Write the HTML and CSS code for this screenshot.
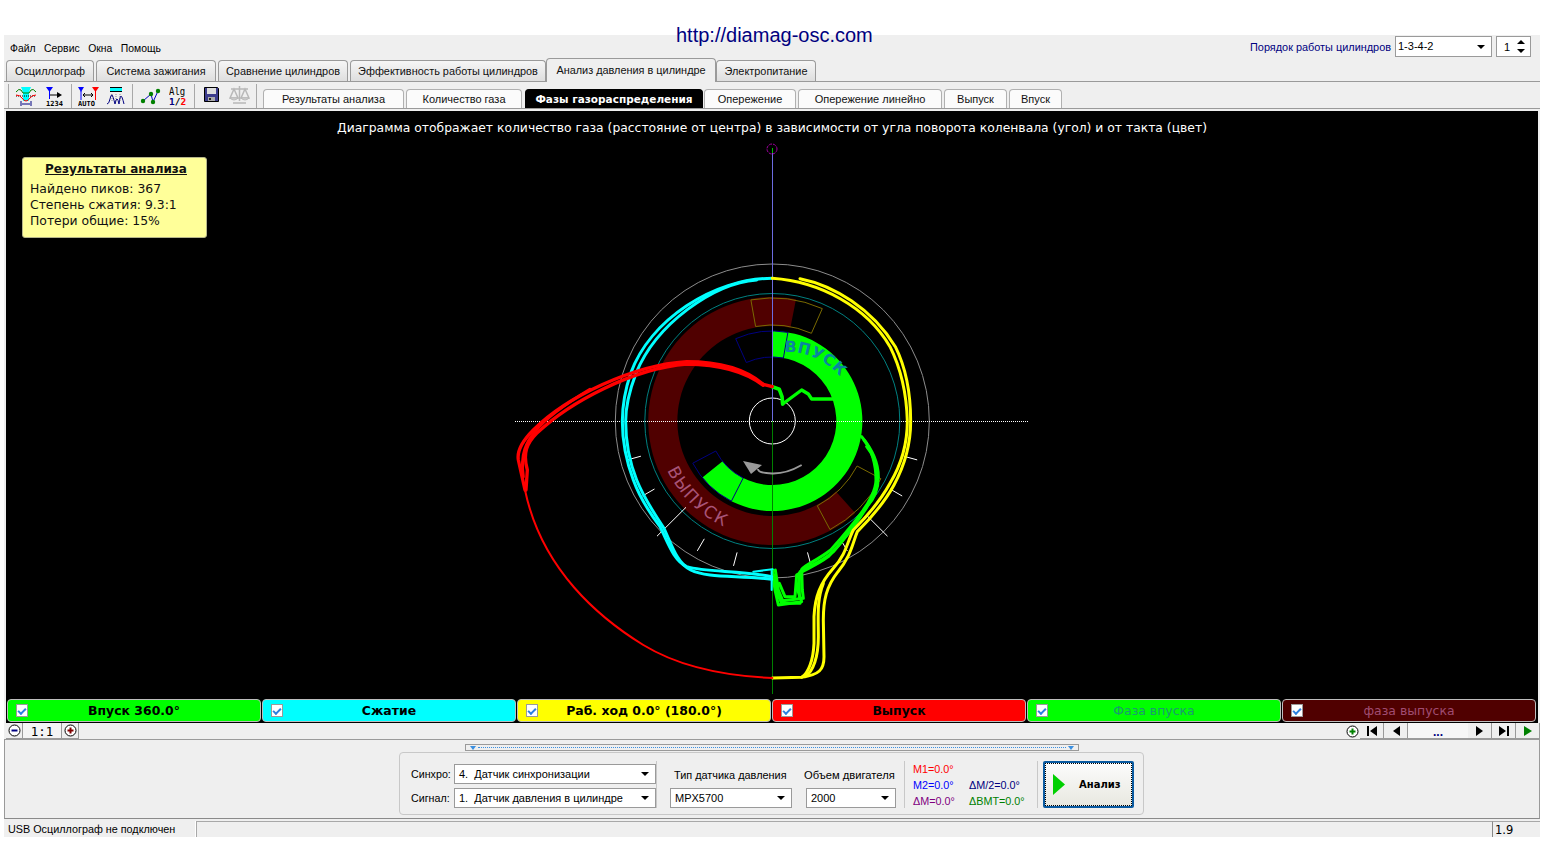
FILE: index.html
```html
<!DOCTYPE html>
<html lang="ru">
<head>
<meta charset="utf-8">
<title>Анализ давления в цилиндре</title>
<link rel="stylesheet" href="styles.css">
</head>
<body>
<div class="url">http://diamag-osc.com</div>
<div class="app">
  <div class="menubar">
    <nav class="menu"><span>Файл</span><span>Сервис</span><span>Окна</span><span>Помощь</span></nav>
    <div class="order">
      <span class="order-label">Порядок работы цилиндров</span>
      <div class="combo combo-order"><span>1-3-4-2</span><i class="arrow"></i></div>
      <div class="combo combo-spin"><span>1</span><b class="spin"><i class="up"></i><i class="down"></i></b></div>
    </div>
  </div>
  <div class="tabs">
    <span class="tab w88">Осциллограф</span>
    <span class="tab w120">Система зажигания</span>
    <span class="tab w130">Сравнение цилиндров</span>
    <span class="tab w195">Эффективность работы цилиндров</span>
    <span class="tab tab-active">Анализ давления в цилиндре</span>
    <span class="tab w100">Электропитание</span>
  </div>
  <div class="toolbar">
    <i class="sep"></i>
    <div class="tools">
      <svg class="ico i1" viewBox="0 0 22 20"><path d="M6 1h10l-2 5v9H8V6z" fill="#00ffff"/><path d="M1 6q3-4 5-2l2 3h6l2-3q2-2 5 2" fill="none" stroke="#008000"/><path d="M1 10h20" stroke="#000" stroke-dasharray="1 1"/><path d="M1 9q4 0 6 3t4 3 4-3 6-3" fill="none" stroke="#ff0000"/><path d="M6 15v5M16 15v5M7 18h8" stroke="#000080"/></svg>
      <svg class="ico i2" viewBox="0 0 18 20"><path d="M1 1h7L4.500 6z" fill="#0000ff"/><path d="M4.500 5v8" stroke="#0000ff"/><path d="M5 9h8" stroke="#000"/><path d="M12 6l5 3-5 3z"/><text x="1" y="19.500" class="ico-t">1234</text></svg>
    </div>
    <i class="sep"></i>
    <div class="tools">
      <svg class="ico i3" viewBox="0 0 21 20"><path d="M0 1h6L3 6z" fill="#0000ff"/><path d="M14 1h7l-3.500 5z" fill="#ff0000"/><path d="M3 5v9" stroke="#0000ff"/><path d="M17.500 5v9" stroke="#ff0000"/><path d="M6 9h9M7 7l-2 2 2 2M13 7l2 2-2 2" fill="none" stroke="#000"/><text x="0" y="19.500" class="ico-t">AUTO</text></svg>
      <svg class="ico i4" viewBox="0 0 20 20"><path d="M4 1h12v1H4zM4 5h12v1H4z" fill="#000"/><path d="M4 2h12v3H4z" fill="#00ffff"/><path d="M6 8v8M10 8v8M14 8v8" stroke="#888" stroke-dasharray="1 1"/><path d="M1 18q2 0 3-5t2-4 3 9q1-5 2-5t2 5q1-8 2-8t3 8" fill="none" stroke="#000080"/></svg>
    </div>
    <i class="sep"></i>
    <div class="tools">
      <svg class="ico i5" viewBox="0 0 21 20"><path d="M3 15l8-7 2 8 5-11" fill="none" stroke="#0000c0"/><circle cx="3" cy="15" r="2.200" fill="#008000"/><circle cx="11" cy="8" r="2.200" fill="#008000"/><circle cx="13" cy="16" r="2.200" fill="#008000"/><circle cx="18" cy="5" r="2.200" fill="#008000"/></svg>
      <svg class="ico i6" viewBox="0 0 17 20"><text x="0" y="7.500" class="alg" transform="scale(1 1.250)">Alg</text><text x="0" y="19" class="alg-b">1<tspan fill="#000">/</tspan><tspan fill="#ff0000">2</tspan></text></svg>
    </div>
    <i class="sep"></i>
    <div class="tools">
      <svg class="ico i7" viewBox="0 0 15 15"><path d="M.5.5h13l1 1v13H.5z" fill="#3c3c8c" stroke="#000"/><path d="M3 1h9v6H3z" fill="#ddd"/><path d="M4 10h7v4H4z" fill="#aaa"/><path d="M5 11h2v2H5z" fill="#222"/></svg>
      <svg class="ico i8" viewBox="0 0 21 20"><path d="M2 4h17M10.500 1v15M4 18h13M5 4l-4 9h8zM16 4l-4 9h8z" fill="none" stroke="#b8b8b8" stroke-width="1.500"/><path d="M1 13q4 4 8 0zM12 13q4 4 8 0z" fill="#d8d8d8" stroke="#b8b8b8"/></svg>
    </div>
    <i class="sep"></i>
    <div class="subtabs">
      <span class="sub w142">Результаты анализа</span>
      <span class="sub w116">Количество газа</span>
      <span class="sub sub-active">Фазы газораспределения</span>
      <span class="sub w93">Опережение</span>
      <span class="sub w145">Опережение линейно</span>
      <span class="sub w63">Выпуск</span>
      <span class="sub w54">Впуск</span>
    </div>
  </div>
  <div class="canvas">
    <svg class="plot" viewBox="6 111 1532 611" width="1532" height="611">
      <defs>
        <path id="tp-in" d="M784.500 352A70 70 0 0 1 850 392"/>
        <path id="tp-out" d="M667.200 470.100A116 116 0 0 0 750 535"/>
      </defs>
      <path class="band-ex" d="M855.300 513.100A124 124 0 1 1 796 299.300L790.400 327.700A95 95 0 1 0 835.900 491.600Z"/>
      <path class="band-in" d="M772.300 331A90 90 0 1 1 702.400 477.600L722.600 461.300A64 64 0 1 0 772.300 357Z"/>
      <path class="box-b" d="M735.700 338.700A90 90 0 0 1 787.900 332.400L783.400 358A64 64 0 0 0 746.300 362.500Z"/>
      <path class="box-b" d="M731.400 501.200A90 90 0 0 1 692.800 463.200L715.800 451A64 64 0 0 0 743.200 478Z"/>
      <path class="box-o" d="M750.900 299.900A123 123 0 0 1 822.300 308.600L811.400 333.300A96 96 0 0 0 755.600 326.500Z"/>
      <path class="box-o" d="M880.900 478.700A123 123 0 0 1 830 529.600L817.300 505.800A96 96 0 0 0 857.100 466Z"/>
      <text class="arc-in"><textPath href="#tp-in">ВПУСК</textPath></text>
      <text class="arc-out"><textPath href="#tp-out">ВЫПУСК</textPath></text>
      <circle class="c-outer" cx="772.300" cy="421" r="157"/>
      <circle class="c-teal" cx="772.300" cy="421" r="127.500"/>
      <circle class="c-mid" cx="772.300" cy="421" r="23"/>
      <path class="ticks" d="M903.700 456.200L917.200 459.900M890.100 489L902.200 496M866.300 515L887.500 536.200M840.300 538.800L847.300 550.900M807.500 552.400L811.100 565.900M737.100 552.400L733.500 565.900M704.300 538.800L697.300 550.900M686 507.300L657 536.200M654.500 489L642.400 496M640.900 456.200L627.400 459.900"/>
      <path class="cross" d="M515 421.500H1029"/>
      <path class="axis-up" d="M772.500 153V421"/>
      <path class="axis-down" d="M772.500 421V694"/>
      <path class="axis-mark" d="M772.500 148V153"/>
      <circle class="mark" cx="772" cy="149" r="5"/>
      <path class="arrow-arc" d="M801.700 465Q786 474 772 473.500T758 469"/>
      <path class="arrow-head" d="M743 461L762 465 751 474Z"/>
      <g transform="translate(500 250) scale(.33333)">
        <g class="s-green">
          <path class="w12" d="M817 410L838 418 846 440 848 462"/>
          <path class="w9" d="M848 462L905 420 925 432 935 447H1000"/>
          <path d="M1085 560C1110 590 1135 630 1135 680C1135 720 1120 750 1100 770C1075 810 1040 860 1000 905C960 940 920 950 900 965L893 1020 905 1055 835 1065 825 1020 817 960"/>
          <path d="M1092 570C1115 600 1128 640 1128 690C1128 720 1105 760 1090 780C1065 815 1032 855 992 900C950 932 915 945 905 958L907 1020 910 1045 848 1052 835 1020 826 960"/>
          <path d="M1100 590C1125 620 1136 660 1132 700C1122 750 1090 785 1082 800C1055 835 1030 875 985 920C945 950 910 960 890 975L885 1040 855 1040 838 1000"/>
          <path d="M822 975L832 1030 845 1060H900M898 970V1040"/>
        </g>
        <g class="s-cyan">
          <path d="M817 85C640 85 450 210 392 370C372 430 367 480 367 514C367 590 385 650 400 690C420 745 450 790 480 830C505 880 520 930 560 950C620 968 720 960 815 980"/>
          <path d="M770 90C640 100 468 222 408 370C385 430 377 480 377 514C377 590 394 650 410 690C432 745 462 790 492 835C517 890 532 940 572 960C622 985 720 975 815 988"/>
          <path class="w5" d="M815 960V1020M760 965L818 958"/>
        </g>
        <g class="s-yellow">
          <path d="M817 85C960 95 1100 170 1170 290C1205 360 1220 440 1222 514C1222 590 1200 650 1170 700C1140 755 1090 810 1060 840C1040 880 1040 910 1000 955C960 1000 945 1040 942 1100L942 1180C940 1230 925 1270 905 1282L817 1284"/>
          <path d="M900 86C1000 106 1116 175 1186 290C1221 360 1232 440 1232 514C1232 590 1212 650 1182 705C1152 760 1102 815 1072 845C1056 885 1052 920 1014 965C979 1010 970 1050 970 1110L972 1220C972 1260 957 1274 905 1282"/>
          <path d="M970 1000C950 1050 955 1100 955 1160C955 1220 940 1265 915 1280"/>
        </g>
        <g class="s-red">
          <path class="w9" d="M817 410L790 403C740 360 660 335 560 335C400 345 200 440 100 540C70 570 50 600 55 630L75 720"/>
          <path class="w9" d="M790 406C740 368 660 343 560 342C400 355 210 455 110 550C80 580 68 610 82 660L78 720"/>
          <path d="M270 418C200 460 140 500 105 545C80 575 60 610 70 680"/>
          <path class="thin" d="M75 720C125 960 300 1105 430 1185C540 1252 680 1278 817 1284"/>
        </g>
      </g>
    </svg>
    <div class="title">Диаграмма отображает количество газа (расстояние от центра) в зависимости от угла поворота коленвала (угол) и от такта (цвет)</div>
    <div class="info">
      <div class="info-head">Результаты анализа</div>
      <div>Найдено пиков: 367</div>
      <div>Степень сжатия: 9.3:1</div>
      <div>Потери общие: 15%</div>
    </div>
    <div class="legend">
      <div class="leg leg-g"><i class="chk"></i><b>Впуск 360.0°</b></div>
      <div class="leg leg-c"><i class="chk"></i><b>Сжатие</b></div>
      <div class="leg leg-y"><i class="chk"></i><b>Раб. ход 0.0° (180.0°)</b></div>
      <div class="leg leg-r"><i class="chk"></i><b>Выпуск</b></div>
      <div class="leg leg-fg"><i class="chk"></i><span>Фаза впуска</span></div>
      <div class="leg leg-fr"><i class="chk"></i><span>фаза выпуска</span></div>
    </div>
  </div>
  <div class="zoombar">
    <div class="zoom-left">
      <span class="zbtn zcirc"><svg viewBox="0 0 13 13"><circle cx="6.500" cy="6.500" r="5.500" fill="#fff" stroke="#000"/><path d="M3.500 6.500h6" stroke="#000080" stroke-width="2"/></svg></span>
      <span class="zoom-val">1:1</span>
      <span class="zbtn zcirc"><svg viewBox="0 0 13 13"><circle cx="6.500" cy="6.500" r="5.500" fill="#fff" stroke="#000"/><path d="M3.500 6.500h6M6.500 3.500v6" stroke="#800000" stroke-width="2"/></svg></span>
    </div>
    <div class="zoom-right">
      <span class="zbtn zcirc zplus"><svg viewBox="0 0 13 13"><circle cx="6.500" cy="6.500" r="5.500" fill="#fff" stroke="#000"/><path d="M3.500 6.500h6M6.500 3.500v6" stroke="#008000" stroke-width="2"/></svg></span>
      <span class="zbtn nav"><svg viewBox="0 0 12 10"><path d="M1 0h2v10H1zM11 0v10L4 5z"/></svg></span>
      <span class="zbtn nav"><svg viewBox="0 0 12 10"><path d="M10 0v10L3 5z"/></svg></span>
      <span class="dots">...</span>
      <span class="zbtn nav"><svg viewBox="0 0 12 10"><path d="M2 0v10l7-5z"/></svg></span>
      <span class="zbtn nav"><svg viewBox="0 0 12 10"><path d="M1 0v10l7-5zM9 0h2v10H9z"/></svg></span>
      <span class="zbtn nav"><svg viewBox="0 0 12 10"><path d="M2 0v10l8-5z" fill="#008000"/></svg></span>
    </div>
  </div>
  <div class="panel">
    <div class="strip"><i></i><em></em><i></i></div>
    <div class="group">
      <div class="g-col g-sync">
        <div class="g-row"><label>Синхро:</label><div class="combo combo-sync"><span>4.&nbsp; Датчик синхронизации</span><i class="arrow"></i></div></div>
        <div class="g-row"><label>Сигнал:</label><div class="combo combo-sync"><span>1.&nbsp; Датчик давления в цилиндре</span><i class="arrow"></i></div></div>
      </div>
      <i class="g-sep"></i>
      <div class="g-col g-sensor">
        <label>Тип датчика давления</label>
        <div class="combo combo-mpx"><span>MPX5700</span><i class="arrow"></i></div>
      </div>
      <div class="g-col g-volume">
        <label>Объем двигателя</label>
        <div class="combo combo-vol"><span>2000</span><i class="arrow"></i></div>
      </div>
      <i class="g-sep"></i>
      <div class="marks">
        <span class="m-red">M1=0.0°</span><span></span>
        <span class="m-blue">M2=0.0°</span><span class="m-navy">ΔM/2=0.0°</span>
        <span class="m-purple">ΔM=0.0°</span><span class="m-green">ΔBMT=0.0°</span>
      </div>
      <i class="g-sep"></i>
      <div class="run"><svg viewBox="0 0 12 21"><path d="M0 0l12 10.500L0 21z" fill="#00d000"/></svg><b>Анализ</b></div>
    </div>
  </div>
  <div class="status">
    <div class="st st-a">USB Осциллограф не подключен</div>
    <div class="st st-b"></div>
    <div class="st st-c">1.9</div>
  </div>
</div>
</body>
</html>
```
FILE: styles.css
```css
* { box-sizing: border-box; }
html, body { margin: 0; padding: 0; background: #fff; }
body { font: 11px/14px "Liberation Sans", Arial, sans-serif; color: #000; height: 842px; overflow: hidden; position: relative; }
i, em { display: block; font-style: normal; }

.url { position: absolute; left: 676px; top: 23px; font-size: 20px; line-height: 24px; color: #000080; z-index: 2; }
.app { width: 1536px; height: 802px; margin: 35px 0 0 4px; background: #efefef; display: flex; flex-direction: column; }

.menubar { height: 24px; display: flex; justify-content: space-between; align-items: flex-start; flex: none; }
.menu { display: flex; gap: 8.500px; padding: 7px 0 0 6px; font-size: 10.400px; }
.order { display: flex; gap: 4px; align-items: center; padding: 1px 9px 0 0; }
.order-label { color: #000080; font-size: 10.900px; padding-top: 1px; }

.combo { background: #fff; border: 1px solid #9a9a9a; display: flex; align-items: center; justify-content: space-between; height: 20px; padding: 0 3px 0 4px; font-size: 11px; white-space: nowrap; }
.arrow { width: 0; height: 0; border: 4px solid transparent; border-top: 4px solid #000; border-bottom: 0; margin-right: 3px; }
.combo-order { width: 97px; height: 21px; padding: 2px 3px 0 2px; align-items: flex-start; }
.combo-order .arrow { margin-top: 6px; }
.combo-spin { width: 35px; height: 21px; padding-left: 7px; }
.spin { display: flex; flex-direction: column; gap: 5px; margin-right: 2px; }
.up, .down { width: 0; height: 0; border: 4px solid transparent; }
.up { border-bottom: 4px solid #000; border-top: 0; }
.down { border-top: 4px solid #000; border-bottom: 0; }

.tabs { height: 23px; display: flex; align-items: flex-end; gap: 2px; padding-left: 2px; border-bottom: 1px solid #9a9a9a; flex: none; }
.tab { height: 21px; display: flex; align-items: center; justify-content: center; border: 1px solid #9a9a9a; border-bottom: 0; border-radius: 4px 4px 0 0; background: linear-gradient(#f6f6f6, #dedede); font-size: 10.900px; color: #111; white-space: nowrap; }
.tab-active { width: 170px; height: 24px; margin: 0 -2px -1px -2px; background: #efefef; padding-bottom: 2px; position: relative; }
.w88 { width: 88px; } .w120 { width: 120px; } .w130 { width: 130px; } .w195 { width: 196px; } .w100 { width: 100px; }

.toolbar { height: 27px; display: flex; align-items: stretch; padding-left: 4px; border-bottom: 1px solid #9a9a9a; flex: none; }
.tools { display: flex; align-items: flex-start; padding-top: 3px; }
.sep { width: 1px; margin: 2px 0 0; background: #a8a8a8; height: 24px; flex: none; }
.ico { display: block; flex: none; }
.i1 { width: 22px; height: 20px; margin: 1px 8px 0 6px; }
.i2 { width: 18px; height: 20px; margin: 1px 8px 0 0; }
.i3 { width: 21px; height: 20px; margin: 1px 7px 0 6px; }
.i4 { width: 20px; height: 20px; margin: 1px 6px 0 0; }
.i5 { width: 21px; height: 20px; margin: 1px 8px 0 7px; }
.i6 { width: 17px; height: 20px; margin: 1px 8px 0 0; }
.i7 { width: 15px; height: 15px; margin: 2px 10px 0 9px; }
.i8 { width: 21px; height: 20px; margin: 0 6px 0 0; }
.ico-t { font: bold 7px "DejaVu Sans Mono", monospace; fill: #000; }
.alg { font: 9px "DejaVu Sans Mono", monospace; fill: #000; }
.alg-b { font: bold 9.500px "DejaVu Sans Mono", monospace; fill: #000080; }

.subtabs { display: flex; align-items: flex-end; gap: 2px; padding: 0 0 0 6px; }
.sub { height: 19px; display: flex; align-items: center; justify-content: center; border: 1px solid #b0b0b0; border-bottom: 0; border-radius: 4px 4px 0 0; background: #fbfbfb; font-size: 11px; color: #111; white-space: nowrap; }
.sub-active { width: 178px; background: #000; color: #fff; font: bold 10.500px "DejaVu Sans", sans-serif; border-color: #000; margin: 0 -1px 0 1px; }
.w142 { width: 141px; } .w116 { width: 116px; } .w93 { width: 92px; } .w145 { width: 144px; } .w63 { width: 63px; } .w54 { width: 53px; }

.canvas { margin: 2px 2px 0; height: 612px; background: #000; position: relative; display: flex; flex-direction: column; justify-content: space-between; flex: none; }
.plot { position: absolute; left: 0; top: 0; }
.plot path, .plot circle { fill: none; }
.plot .band-ex { fill: #500000; }
.plot .band-in { fill: #00ff00; }
.box-b { stroke: #000080; }
.box-o { stroke: #7a6a00; }
.arc-in { font: bold 15.500px "DejaVu Sans", sans-serif; fill: #0a85a0; letter-spacing: .5px; }
.arc-out { font: 17px "DejaVu Sans", sans-serif; fill: #a85478; letter-spacing: 1.500px; }
.c-outer { stroke: #8c8c8c; }
.c-teal { stroke: #008080; }
.c-mid { stroke: #fff; }
.ticks { stroke: #fff; }
.cross { stroke: #fff; stroke-dasharray: 1 1; }
.axis-up { stroke: #6c6ce0; }
.axis-down { stroke: #008000; }
.axis-mark { stroke: #00c000; }
.mark { stroke: #a000a0; stroke-dasharray: 3 1; }
.arrow-arc { stroke: #999; stroke-width: 2; }
.plot .arrow-head { fill: #999; }
.s-green path, .s-cyan path, .s-yellow path, .s-red path { stroke-width: 9; stroke-linejoin: round; stroke-linecap: round; }
.s-green path { stroke: #00ff00; }
.s-cyan path { stroke: #00ffff; }
.s-yellow path { stroke: #ffff00; }
.s-red path { stroke: #ff0000; }
.s-green .w12 { stroke-width: 11; }
.s-green .w9, .s-red .w9 { stroke-width: 10; }
.s-cyan .w5 { stroke-width: 6; }
.s-red .thin { stroke-width: 6; }

.title { position: relative; text-align: center; color: #fff; font: 12.350px/16px "DejaVu Sans", sans-serif; padding-top: 9px; margin-bottom: 13px; height: 25px; }
.info { position: absolute; left: 16px; top: 46px; width: 185px; height: 81px; background: #ffff99; border: 1px solid #b5b58a; border-radius: 3px; padding: 3px 0 0 7px; font: 12.400px/16px "DejaVu Sans", sans-serif; color: #111; }
.info-head { font-size: 12px; font-weight: bold; text-decoration: underline; text-align: center; margin-bottom: 4px; padding-right: 4px; }

.legend { position: relative; display: flex; gap: 1px; padding: 0 2px 0 1px; height: 24px; }
.leg { flex: 1; height: 23px; border: 1px solid #bdbdbd; border-radius: 4px; position: relative; display: flex; align-items: center; justify-content: center; font: 12.450px "DejaVu Sans", sans-serif; }
.chk { position: absolute; left: 8px; top: 4px; width: 12px; height: 13px; background: #fff; border: 1px solid #9a9a9a; }
.chk::after { content: ""; display: block; width: 6px; height: 3px; margin: 3px 0 0 1px; border-left: 2px solid #2a80e0; border-bottom: 2px solid #2a80e0; transform: rotate(-45deg); }
.leg-g { background: #00ff00; }
.leg-c { background: #00ffff; }
.leg-y { background: #ffff00; }
.leg-r { background: #ff0000; }
.leg-fg { background: #00ff00; color: #1a9a70; }
.leg-fr { background: #500000; color: #a04c72; }

.zoombar { height: 17px; display: flex; justify-content: space-between; border-bottom: 1px solid #9a9a9a; padding: 0 0 0 2px; flex: none; }
.zoom-left, .zoom-right { display: flex; height: 16px; }
.zbtn { width: 17px; height: 16px; background: #efefef; border-right: 1px solid #9a9a9a; border-bottom: 1px solid #9a9a9a; display: flex; align-items: center; justify-content: center; }
.zcirc svg { width: 13px; height: 13px; }
.zoom-val { width: 39px; height: 16px; text-align: center; font: 12.500px/17px "DejaVu Sans Mono", monospace; background: #f4f4f4; border-right: 1px solid #9a9a9a; border-bottom: 1px solid #9a9a9a; }
.zplus { width: 16px; border-right: 0; border-bottom: 0; }
.nav { width: 24px; }
.nav svg { width: 12px; height: 10px; }
.dots { width: 60px; text-align: center; color: #000080; font: bold 12px/18px "Liberation Sans", sans-serif; background: #f6f6f6; border-bottom: 1px solid #9a9a9a; }

.panel { height: 79px; border-bottom: 1px solid #8a8a8a; border-left: 1px solid #9a9a9a; border-right: 1px solid #9a9a9a; display: flex; flex-direction: column; align-items: center; flex: none; padding-top: 4px; }
.strip { width: 614px; height: 7px; border: 1px solid #9a9a9a; background: #efefef; display: flex; justify-content: space-between; align-items: center; padding: 0 4px; gap: 2px; }
.strip i { width: 0; height: 0; border: 3px solid transparent; border-top: 4px solid #3a8fe0; border-bottom: 0; }
.strip em { flex: 1; border-top: 1px dotted #3a8fe0; }
.group { width: 745px; height: 63px; margin: 1px 0 0 -1px; border: 1px solid #c8c8c8; border-radius: 4px; display: flex; align-items: stretch; padding: 5px 5px 5px 11px; }
.g-col { display: flex; flex-direction: column; }
.g-sync { width: 245px; gap: 4px; padding-top: 6px; flex: none; }
.g-row { display: flex; align-items: center; gap: 4px; font-size: 10.700px; }
.g-row label { width: 39px; }
.combo-sync { width: 202px; }
.g-sep { width: 1px; background: #c8c8c8; margin: 3px 0 1px; flex: none; }
.g-sensor { width: 136px; margin-left: 13px; padding-top: 10px; gap: 6px; flex: none; }
.g-sensor label, .g-volume label { font-size: 10.900px; padding-left: 4px; white-space: nowrap; }
.combo-mpx { width: 122px; }
.g-volume { width: 98px; padding-top: 10px; gap: 6px; flex: none; }
.g-volume label { font-size: 11.200px; padding-left: 0; margin-left: -2px; }
.combo-vol { width: 90px; }
.marks { display: grid; grid-template-columns: 56px 60px; grid-auto-rows: 16px; font-size: 10.800px; padding: 4px 0 0 8px; width: 132px; flex: none; }
.m-red { color: #ff0000; } .m-blue { color: #0000ff; } .m-navy { color: #000080; } .m-purple { color: #800080; } .m-green { color: #008000; }
.run { width: 91px; height: 47px; margin: 3px 0 0 5px; border: 2px solid #0a5aa0; border-radius: 2px; outline: 1px dotted #000; outline-offset: -3px; background: linear-gradient(#fcfcfc, #e8e8e0); display: flex; align-items: center; padding: 0 0 0 8px; gap: 14px; font: bold 10px "DejaVu Sans", sans-serif; flex: none; }
.run svg { width: 12px; height: 21px; }

.status { height: 16px; margin-top: 2px; display: flex; flex: none; font-size: 10.800px; }
.st { height: 16px; line-height: 17px; }
.st-a { width: 192px; padding-left: 4px; border-right: 1px solid #fff; }
.st-b { flex: 1; border-left: 1px solid #a8a8a8; border-top: 1px solid #a8a8a8; }
.st-c { width: 48px; padding-left: 2px; border-left: 1px solid #888; border-top: 1px solid #a8a8a8; font: 11.500px/16px "DejaVu Sans", sans-serif; }
```
